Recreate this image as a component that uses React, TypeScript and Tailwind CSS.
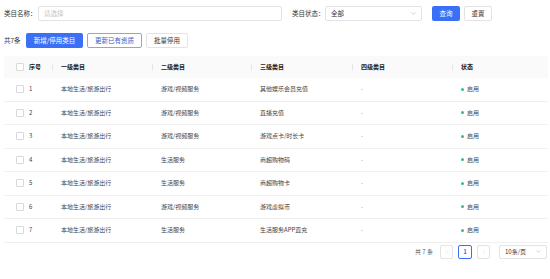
import { ChevronDown, ChevronLeft, ChevronRight } from "lucide-react";

const rows = [
  { id: 1, l1: "本地生活/旅游出行", l2: "游戏/视频服务", l3: "其他娱乐会员充值" },
  { id: 2, l1: "本地生活/旅游出行", l2: "游戏/视频服务", l3: "直播充值" },
  { id: 3, l1: "本地生活/旅游出行", l2: "游戏/视频服务", l3: "游戏点卡/时长卡" },
  { id: 4, l1: "本地生活/旅游出行", l2: "生活服务", l3: "商超购物码" },
  { id: 5, l1: "本地生活/旅游出行", l2: "生活服务", l3: "商超购物卡" },
  { id: 6, l1: "本地生活/旅游出行", l2: "游戏/视频服务", l3: "游戏虚拟币" },
  { id: 7, l1: "本地生活/旅游出行", l2: "生活服务", l3: "生活服务APP直充" },
];

function Checkbox() {
  return <span className="block h-[8px] w-[8px] rounded-[1px] border border-[#d9d9d9] bg-white" />;
}

function Divider() {
  return <span className="absolute left-0 top-1/2 h-[7px] w-px -translate-y-1/2 bg-[#e5e5e5]" />;
}

export default function App() {
  return (
    <div
      className="h-[279px] w-[550px] whitespace-nowrap bg-white text-[6px] leading-none text-[#333]"
      style={{ fontFamily: '"Noto Sans CJK SC", "Noto Sans", sans-serif' }}
    >
      {/* filters */}
      <div className="flex items-center pl-[4px] pt-[6px] text-[6.5px]">
        <span className="w-[34px] shrink-0">类目名称：</span>
        <div className="flex h-[15px] w-[244px] shrink-0 items-center rounded-[2px] border border-[#e3e3e3] px-[5px] text-[#c4c4c4]">
          请选择
        </div>
        <span className="ml-[10px] w-[33px] shrink-0">类目状态：</span>
        <div className="flex h-[15px] w-[97px] shrink-0 items-center justify-between rounded-[2px] border border-[#e3e3e3] pl-[5px] pr-[4px]">
          <span>全部</span>
          <ChevronDown size={7} strokeWidth={1.5} className="text-[#999]" />
        </div>
        <button className="ml-[10px] flex h-[15px] w-[28px] items-center justify-center rounded-[2px] bg-[#3b6ff5] text-white">
          查询
        </button>
        <button className="ml-[4px] flex h-[15px] w-[28px] items-center justify-center rounded-[2px] border border-[#e3e3e3] text-[#333]">
          重置
        </button>
      </div>

      {/* actions */}
      <div className="mt-[12px] flex items-center pl-[4px] text-[6.5px]">
        <span className="w-[22px] shrink-0">共7条</span>
        <button className="flex h-[15px] w-[57px] items-center justify-center rounded-[2px] bg-[#3b6ff5] text-white">
          新增/停用类目
        </button>
        <button className="ml-[4px] flex h-[15px] w-[55px] items-center justify-center rounded-[2px] border border-[#8aa6e8] text-[#3b5ec8]">
          更新已有资质
        </button>
        <button className="ml-[4px] flex h-[15px] w-[42px] items-center justify-center rounded-[2px] border border-[#e3e3e3] text-[#333]">
          批量停用
        </button>
      </div>

      {/* table */}
      <div className="ml-[4px] mr-[2px] mt-[8px]">
        <div className="flex h-[22px] items-center bg-[#fafafa] font-semibold text-[#222]">
          <div className="flex w-[23px] justify-end pr-[3px]">
            <Checkbox />
          </div>
          <div className="w-[25px] pl-[2px]">序号</div>
          <div className="relative w-[100px] pl-[9px]">
            <Divider />
            一级类目
          </div>
          <div className="relative w-[99px] pl-[9px]">
            <Divider />
            二级类目
          </div>
          <div className="relative w-[101px] pl-[9px]">
            <Divider />
            三级类目
          </div>
          <div className="relative w-[100px] pl-[9px]">
            <Divider />
            四级类目
          </div>
          <div className="relative flex-1 pl-[9px]">
            <Divider />
            状态
          </div>
        </div>
        {rows.map((r) => (
          <div key={r.id} className="flex h-[23.5px] items-center border-b border-[#f0f0f0] text-[#444]">
            <div className="flex w-[23px] justify-end pr-[3px]">
              <Checkbox />
            </div>
            <div className="w-[25px] pl-[2px]">{r.id}</div>
            <div className="w-[100px] pl-[9px]">{r.l1}</div>
            <div className="w-[99px] pl-[9px]">{r.l2}</div>
            <div className="w-[101px] pl-[9px]">{r.l3}</div>
            <div className="w-[100px] pl-[9px] text-[#999]">-</div>
            <div className="flex flex-1 items-center gap-[3px] pl-[9px]">
              <span className="h-[3px] w-[3px] rounded-full bg-[#2fc27a]" />
              启用
            </div>
          </div>
        ))}
      </div>

      {/* pagination */}
      <div className="mt-[2px] flex items-center justify-end pr-[3px]">
        <span className="mr-[7px] text-[#555]">共 7 条</span>
        <div className="flex h-[14px] w-[13px] items-center justify-center rounded-[2px] border border-[#e3e3e3] text-[#ccc]">
          <ChevronLeft size={6} strokeWidth={1.5} />
        </div>
        <div className="ml-[5px] flex h-[14px] w-[14px] items-center justify-center rounded-[2px] border border-[#3b6ff5] font-semibold text-[#3b6ff5]">
          1
        </div>
        <div className="ml-[5px] flex h-[14px] w-[13px] items-center justify-center rounded-[2px] border border-[#e3e3e3] text-[#ccc]">
          <ChevronRight size={6} strokeWidth={1.5} />
        </div>
        <div className="ml-[9px] flex h-[14px] w-[48px] items-center justify-between rounded-[2px] border border-[#e3e3e3] pl-[5px] pr-[4px]">
          <span>10条/页</span>
          <ChevronDown size={7} strokeWidth={1.5} className="text-[#999]" />
        </div>
      </div>
    </div>
  );
}
